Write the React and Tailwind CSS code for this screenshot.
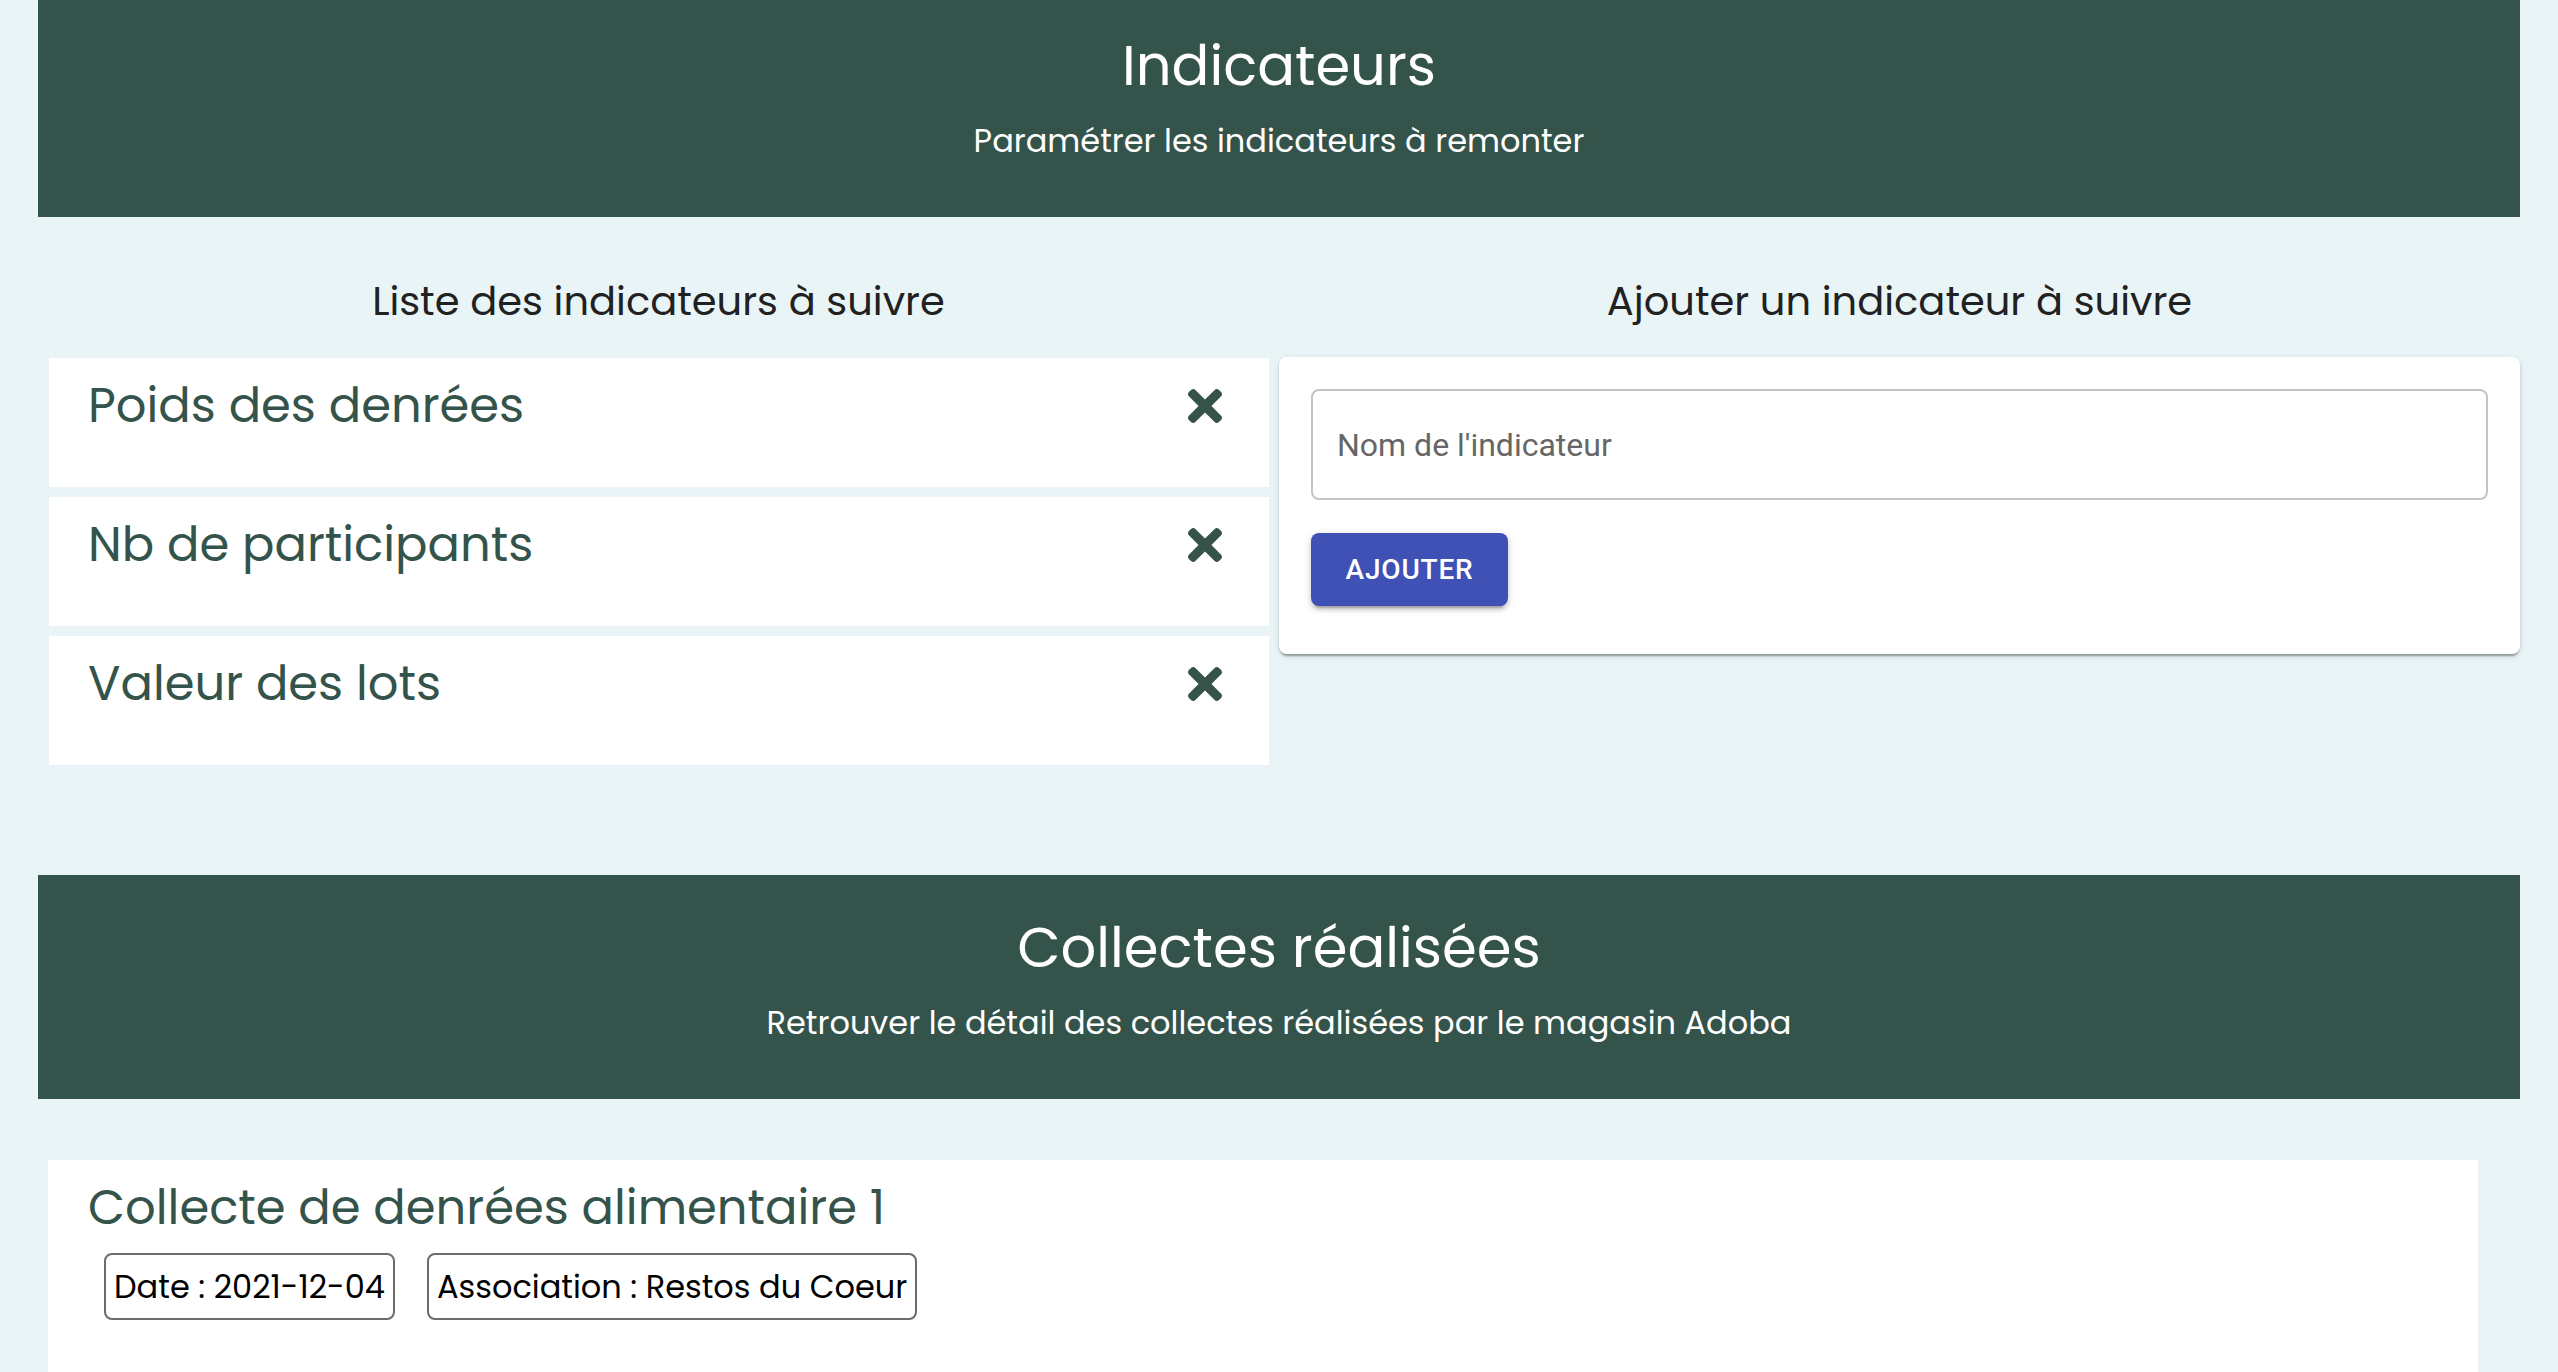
import React from "react";

const XIcon = () => (
  <svg width="34" height="34" viewBox="0 80 352 352" className="shrink-0" aria-hidden="true">
    <path
      fill="#35524b"
      d="M242.72 256l100.07-100.07c12.28-12.28 12.28-32.19 0-44.48l-22.24-22.24c-12.28-12.28-32.19-12.28-44.48 0L176 189.28 75.930 89.21c-12.28-12.28-32.19-12.28-44.48 0L9.21 111.45c-12.28 12.28-12.28 32.19 0 44.48L109.28 256 9.21 356.07c-12.28 12.28-12.28 32.19 0 44.48l22.24 22.24c12.28 12.28 32.2 12.28 44.480 0L176 322.72l100.07 100.07c12.28 12.28 32.2 12.28 44.48 0l22.24-22.24c12.28-12.28 12.28-32.19 0-44.48L242.72 256z"
    />
  </svg>
);

const Banner = ({ title, subtitle, className = "" }) => (
  <div className={"h-[224px] bg-[#34534b] text-white flex flex-col items-center pt-[35px] " + className}>
    <h1 className="text-[56px] leading-[76px] font-normal">{title}</h1>
    <p className="mt-[15px] text-[32px] leading-[44px] font-normal">{subtitle}</p>
  </div>
);

const indicators = ["Poids des denrées", "Nb de participants", "Valeur des lots"];

export default function App() {
  return (
    <div className="min-h-screen bg-[#e8f4f6] px-[38px] font-['Poppins','Open_Sans',sans-serif] pb-[40px]">
      <Banner className="-mt-[7px]" title="Indicateurs" subtitle="Paramétrer les indicateurs à remonter" />

      <div className="grid grid-cols-2 items-start">
        <div className="flex flex-col">
          <h2 className="mt-[58px] text-center text-[40px] leading-[52px] text-[#212121] font-normal">
            Liste des indicateurs à suivre
          </h2>
          <div className="mt-[31px] ml-[11px] mr-[10px] flex flex-col gap-[10px]">
            {indicators.map((name) => (
              <div key={name} className="h-[129px] bg-white flex justify-between items-start pl-[39px] pr-[47px]">
                <span className="mt-[20px] text-[48px] leading-[56px] text-[#34534b]">{name}</span>
                <div className="mt-[31px]">
                  <XIcon />
                </div>
              </div>
            ))}
          </div>
        </div>

        <div className="flex flex-col">
          <h2 className="mt-[58px] text-center text-[40px] leading-[52px] text-[#212121] font-normal">
            Ajouter un indicateur à suivre
          </h2>
          <div className="mt-[30px] bg-white rounded-[8px] shadow-[0_4px_2px_-2px_rgba(0,0,0,0.2),0_2px_2px_0_rgba(0,0,0,0.14),0_2px_6px_0_rgba(0,0,0,0.12)] pt-[32px] pl-[32px] pr-[32px] pb-[48px] font-['Roboto',sans-serif]">
            <input
              type="text"
              placeholder="Nom de l'indicateur"
              className="block w-full h-[111px] border-2 border-[#c4c4c4] rounded-[8px] pl-[24px] text-[32px] text-[#212121] placeholder:text-[#666666] outline-none bg-white"
            />
            <button className="mt-[33px] h-[73px] w-[197px] rounded-[8px] bg-[#3f51b5] text-white text-[28px] font-medium uppercase tracking-[0.8px] shadow-[0_6px_2px_-4px_rgba(0,0,0,0.2),0_4px_4px_0_rgba(0,0,0,0.14),0_2px_10px_0_rgba(0,0,0,0.12)]">
              Ajouter
            </button>
          </div>
        </div>
      </div>

      <Banner
        className="mt-[110px]"
        title="Collectes réalisées"
        subtitle="Retrouver le détail des collectes réalisées par le magasin Adoba"
      />

      <div className="mt-[61px] ml-[10px] mr-[42px] bg-white h-[400px] pl-[40px] pt-[20px]">
        <h3 className="text-[48px] leading-[56px] text-[#34534b] font-normal">Collecte de denrées alimentaire 1</h3>
        <div className="mt-[17px] ml-[16px] flex gap-[32px]">
          <div className="h-[67px] flex items-center px-[8px] border-2 border-[#6b6b6b] rounded-[8px] text-[32px] leading-[44px] text-black">
            Date : 2021-12-04
          </div>
          <div className="h-[67px] flex items-center px-[8px] border-2 border-[#6b6b6b] rounded-[8px] text-[32px] leading-[44px] text-black">
            Association : Restos du Coeur
          </div>
        </div>
      </div>
    </div>
  );
}
